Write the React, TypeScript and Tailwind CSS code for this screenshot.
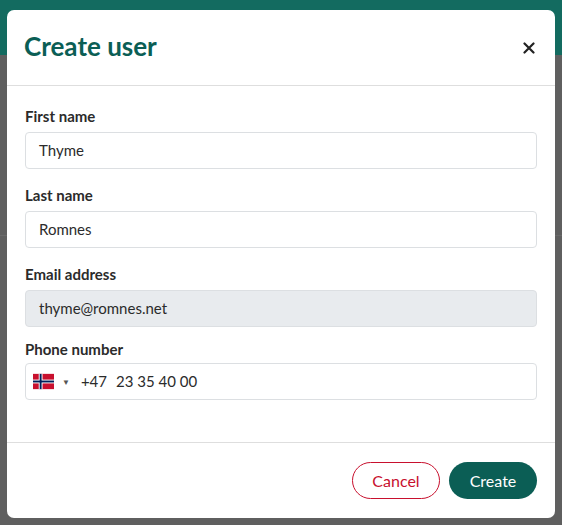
import React from "react";

function Field({ label, value, disabled }: { label: string; value: string; disabled?: boolean }) {
  return (
    <div className="flex flex-col">
      <label className="text-[15px] font-bold text-[#2b2b2b] leading-[18px] mb-[7px]">{label}</label>
      <div className={`h-[37px] rounded-[4px] border border-[#dcdfe2] px-[13px] flex items-center text-[15px] text-[#2b2b2b] ${disabled ? "bg-[#e8ebee]" : "bg-white"}`}>{value}</div>
    </div>
  );
}

export default function App() {
  return (
    <div className="relative w-[562px] h-[525px] overflow-hidden bg-[#5f5f5f]" style={{ fontFamily: "Lato, 'Open Sans', sans-serif" }}>
      <div className="h-[55px] bg-[#136b60]" />
      <div className="border-t border-[#6a6a6a] h-[180px] mt-[180px]" />
      <div className="absolute left-[7px] top-[10px] w-[548px] h-[508px] bg-white rounded-[7px] flex flex-col">
        <div className="h-[76px] border-b border-[#dedede] flex items-center justify-between pl-[17px] pr-[20px]">
          <h1 className="text-[26px] font-bold text-[#0b5e55] mt-[-2px]">Create user</h1>
          <svg width="12" height="12" viewBox="0 0 12 12"><path d="M1.5 1.5L10.5 10.5M10.5 1.5L1.5 10.5" stroke="#222" strokeWidth="2.2" strokeLinecap="round" /></svg>
        </div>
        <div className="flex-1 px-[18px] pt-[21px] flex flex-col gap-[17px]">
          <Field label="First name" value="Thyme" />
          <Field label="Last name" value="Romnes" />
          <Field label="Email address" value="thyme@romnes.net" disabled />
          <div className="flex flex-col -mt-[4px]">
            <label className="text-[15px] font-bold text-[#2b2b2b] leading-[18px] mb-[5px]">Phone number</label>
            <div className="h-[37px] rounded-[4px] border border-[#dcdfe2] pl-[7px] flex items-center text-[15px] text-[#2b2b2b]">
              <svg width="21" height="17" viewBox="0 0 22 16">
                <rect width="22" height="16" fill="#c8102e" />
                <rect x="6" width="4" height="16" fill="#fff" />
                <rect y="6" width="22" height="4" fill="#fff" />
                <rect x="7" width="2" height="16" fill="#00205b" />
                <rect y="7" width="22" height="2" fill="#00205b" />
              </svg>
              <span className="ml-[8px] text-[8px] text-[#555]">▼</span>
              <span className="ml-[11px]">+47</span>
              <span className="ml-[9px]">23 35 40 00</span>
            </div>
          </div>
        </div>
        <div className="h-[76px] border-t border-[#dedede] flex items-center justify-end gap-[9px] pr-[18px]">
          <button className="h-[37px] w-[88px] rounded-full border border-[#c8102e] text-[#c8102e] text-[16px]">Cancel</button>
          <button className="h-[37px] w-[88px] rounded-full bg-[#0b5e55] text-white text-[16px]">Create</button>
        </div>
      </div>
    </div>
  );
}
